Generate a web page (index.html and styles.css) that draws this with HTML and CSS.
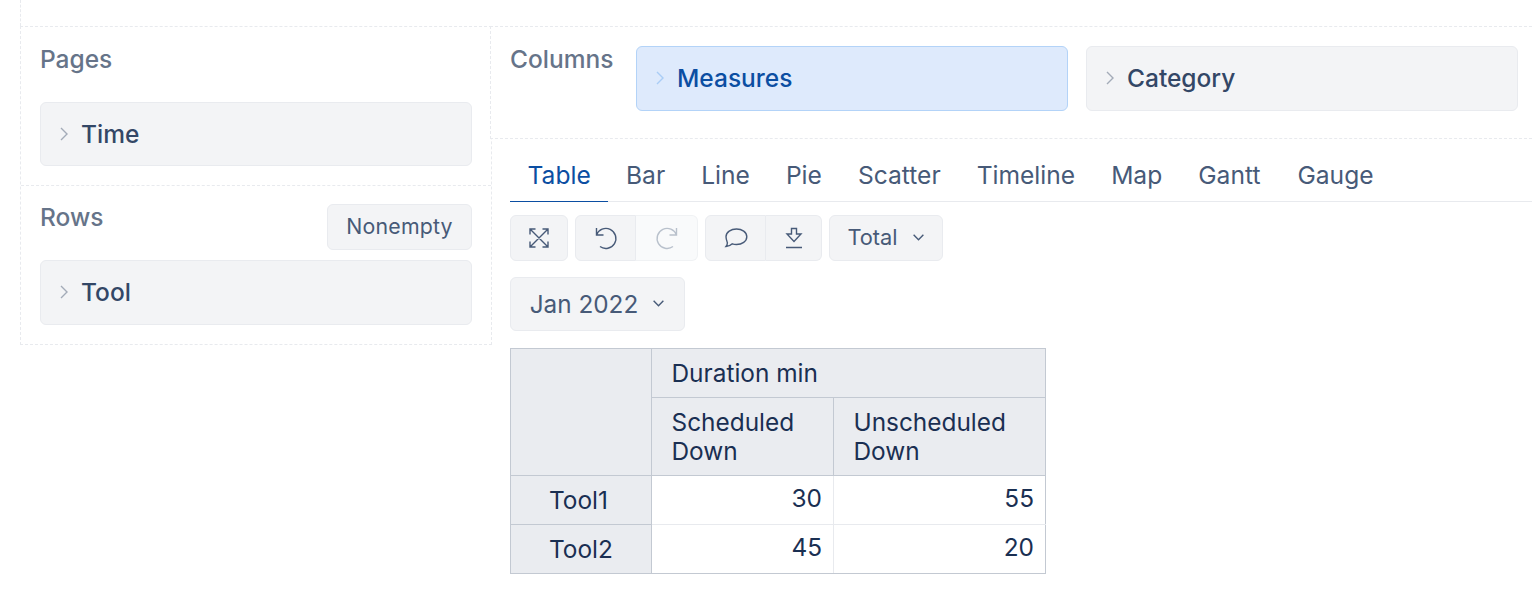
FILE: index.html
```html
<!DOCTYPE html>
<html lang="en">
<head>
<meta charset="utf-8">
<title>Report</title>
<link rel="stylesheet" href="styles.css">
</head>
<body>
<div class="topgap"></div>
<main class="layout">
  <aside class="side">
    <section class="zone pages">
      <h2 class="label">Pages</h2>
      <div class="chip"><svg class="chev" viewBox="0 0 10 16"><path d="M2 2l6 6-6 6"/></svg><span>Time</span></div>
    </section>
    <section class="zone rows">
      <div class="rowhead">
        <h2 class="label">Rows</h2>
        <button class="btn nonempty">Nonempty</button>
      </div>
      <div class="chip chip-tool"><svg class="chev" viewBox="0 0 10 16"><path d="M2 2l6 6-6 6"/></svg><span>Tool</span></div>
    </section>
  </aside>
  <div class="content">
    <section class="columns">
      <h2 class="label">Columns</h2>
      <div class="chip active"><svg class="chev" viewBox="0 0 10 16"><path d="M2 2l6 6-6 6"/></svg><span>Measures</span></div>
      <div class="chip"><svg class="chev" viewBox="0 0 10 16"><path d="M2 2l6 6-6 6"/></svg><span>Category</span></div>
    </section>
    <section class="view">
      <nav class="tabs">
        <a class="tab current">Table</a><a class="tab">Bar</a><a class="tab">Line</a><a class="tab">Pie</a><a class="tab">Scatter</a><a class="tab">Timeline</a><a class="tab">Map</a><a class="tab">Gantt</a><a class="tab">Gauge</a>
      </nav>
      <div class="toolbar">
        <button class="btn icon w58"><svg viewBox="0 0 24 24"><path d="M3 3l18 18M21 3L3 21M3 8.500V3h5.500M15.500 3H21v5.500M3 15.500V21h5.500M21 15.500V21h-5.500"/></svg></button>
        <div class="group">
          <button class="btn icon w61"><svg viewBox="0 0 24 24"><path d="M2.500 2v7h7M2.500 9A10 10 0 1 1 6 20.500"/></svg></button>
          <button class="btn icon w62 off"><svg viewBox="0 0 24 24"><path d="M21.500 2v7h-7M21.500 9A10 10 0 1 0 18 20.500"/></svg></button>
        </div>
        <div class="group">
          <button class="btn icon w61"><svg viewBox="0 0 24 24"><path d="M12.500 3C18 3 22.800 6.200 22.800 10.800S18 18.500 12.500 18.500c-1.500 0-2.900-.2-4.200-.7-1.500 1.500-3.800 2.500-6.300 2.700.8-1 1.400-2.300 1.400-3.700C2.800 15.100 2 13 2 10.800 2 6.200 7 3 12.500 3z"/></svg></button>
          <button class="btn icon w56"><svg viewBox="0 0 24 24"><path d="M9.500 2.500h5V8h4.500L12 15.500 5 8h4.500zM4 21.500h16"/></svg></button>
        </div>
        <button class="btn drop total">Total<svg class="caret" viewBox="0 0 12 8"><path d="M1.500 1.500L6 6l4.500-4.500"/></svg></button>
      </div>
      <div class="filter">
        <button class="btn drop month">Jan 2022<svg class="caret" viewBox="0 0 12 8"><path d="M1.500 1.500L6 6l4.500-4.500"/></svg></button>
      </div>
      <table class="pivot">
        <colgroup><col class="c1"><col class="c2"><col class="c3"></colgroup>
        <thead>
          <tr class="h1"><th rowspan="2"></th><th colspan="2">Duration min</th></tr>
          <tr class="h2"><th>Scheduled<br>Down</th><th>Unscheduled<br>Down</th></tr>
        </thead>
        <tbody>
          <tr><th>Tool1</th><td>30</td><td>55</td></tr>
          <tr><th>Tool2</th><td>45</td><td>20</td></tr>
        </tbody>
      </table>
    </section>
  </div>
</main>
</body>
</html>
```

FILE: styles.css
```css
* { box-sizing: border-box; }
html, body { margin: 0; padding: 0; background: #fff; overflow: hidden; }
body { font-family: Inter, "Liberation Sans", sans-serif; height: 600px; }

.topgap { height: 26px; margin-left: 20px; border-left: 1px dashed #e8eaee; }

.layout { display: flex; align-items: flex-start; padding-left: 20px; }

.side { width: 472px; flex: none; border: 1px dashed #e8eaee; }
.zone { padding: 0 19px; }
.pages { height: 159px; padding-top: 17px; border-bottom: 1px dashed #e8eaee; }
.rows { height: 158px; padding-top: 18px; }
.rows .label { margin-top: -2px; }

.label { margin: 0; font-size: 24.500px; line-height: 30px; font-weight: 500; color: #667489; }
.pages .label { margin-bottom: 28px; }

.chip {
  display: flex; align-items: center; height: 64px; padding: 0 18px;
  background: #f3f4f6; border: 1px solid #e9ebef; border-radius: 6px;
  font-size: 24.500px; font-weight: 500; color: #334766;
}
.chip span { margin-left: 12px; }
.chev { width: 10px; height: 16px; flex: none; fill: none; stroke: #a3abb8; stroke-width: 1.4; }
.chip.active { background: #deeafc; border-color: #b3d3f8; color: #0b4ea2; }
.chip.active .chev { stroke: #a9cdf6; }

.rowhead { display: flex; justify-content: space-between; align-items: flex-start; height: 56px; }
.chip-tool { height: 65px; padding-bottom: 1px; }

.btn {
  font-family: inherit; color: #475a78; background: #f3f4f6;
  border: 1px solid #e9ebef; border-radius: 6px; padding: 0;
  display: inline-flex; align-items: center; justify-content: center;
}
.nonempty { width: 145px; height: 46px; font-size: 21.300px; letter-spacing: .2px; padding-bottom: 2px; }

.content { flex: 1; min-width: 0; margin-left: -2px; }
.columns {
  display: flex; align-items: flex-start; gap: 18px; background: #fff;
  height: 113px; padding: 19px 14px 0 19px;
  border-top: 1px dashed #e8eaee; border-bottom: 1px dashed #e8eaee; border-left: 1px dashed #e8eaee;
}
.columns .label { width: 108px; flex: none; margin-top: -2px; }
.columns .chip { width: 432px; height: 65px; flex: none; padding-bottom: 1px; }

.view { padding: 0 0 0 20px; }
.tabs { display: flex; height: 63px; border-bottom: 1px solid #e8eaee; padding-top: 18px; }
.tab { padding: 0 18px; font-size: 24.600px; line-height: 36px; color: #475a78; height: 45px; }
.tab.current { color: #0b4ea2; border-bottom: 1px solid #0b4ea2; padding: 0 17.500px; width: 98px; }
.tab:last-child { padding-left: 19px; }

.toolbar { display: flex; gap: 7px; margin-top: 13px; height: 46px; }
.group { display: flex; }
.icon { height: 46px; }
.icon svg { width: 24px; height: 24px; fill: none; stroke: #475a78; stroke-width: 1.4; }
.w58 { width: 58px; }
.w61 { width: 61px; }
.w62 { width: 62px; }
.w56 { width: 56px; }
.group .btn:first-child { border-radius: 6px 0 0 6px; }
.group .btn:last-child { border-radius: 0 6px 6px 0; border-left: 0; }
.off { background: #f9fafb; border-color: #f0f2f4; }
.off svg { stroke: #b9c1cc; }
.drop { height: 46px; }
.total { width: 114px; font-size: 21.800px; padding-bottom: 2px; }
.caret { width: 13px; height: 9px; margin-left: 14px; fill: none; stroke: #475a78; stroke-width: 1.3; }
.filter { margin-top: 16px; }
.month { width: 175px; height: 54px; font-size: 24.300px; padding: 0 0 1px 0; }

.pivot {
  margin-top: 17px; border-collapse: collapse; table-layout: fixed; width: 535px;
  font-size: 24.400px; line-height: 29px; color: #1a2f52; border: 1px solid #c3c9d2;
}
.c1 { width: 141px; }
.c2 { width: 182px; }
.c3 { width: 212px; }
.pivot th { background: #eaecf0; font-weight: 400; border: 1px solid #c3c9d2; text-align: left; padding: 9px 11px 9px 19.500px; }
.pivot .h1 { height: 49px; }
.pivot .h2 { height: 78px; }
.pivot tbody tr { height: 49px; }
.pivot tbody th { padding: 9px 4px 9px 38px; }
.pivot td { text-align: right; padding: 7px 11px 11px; border: 1px solid #e8eaee; }
.pivot tbody tr:first-child td { border-top: 1px solid #c3c9d2; }
.pivot tr td:last-child { border-right: 1px solid #c3c9d2; }
.pivot tbody tr:last-child td { border-bottom: 1px solid #c3c9d2; }
```
